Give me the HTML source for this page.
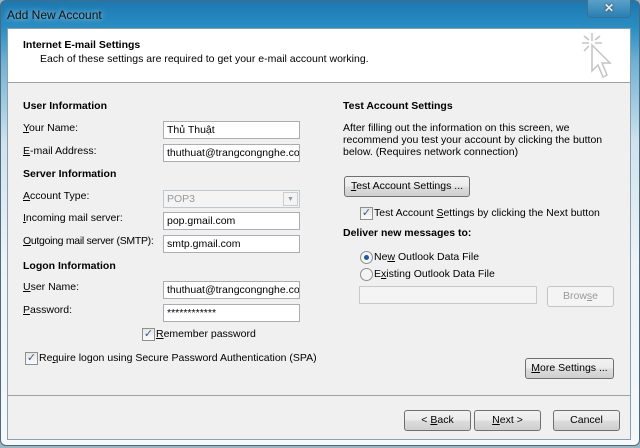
<!DOCTYPE html>
<html><head><meta charset="utf-8"><style>
*{margin:0;padding:0;box-sizing:border-box}
body{width:640px;height:448px;overflow:hidden;background:#9fb4c2;font-family:"Liberation Sans",sans-serif;font-size:10.5px;color:#000;position:relative}
.frame{position:absolute;left:0;top:0;width:640px;height:446px;border-radius:6px;border:1px solid #4a6a80;background:linear-gradient(to bottom,#1b78b0 0px,#2a8fc4 28px,#6fb0d4 60px,#cfe2ec 140px,#eef3f6 260px,#f6f8f9 448px)}
.title{position:absolute;left:7px;top:8px;font-size:12px;color:#111;text-shadow:0 0 6px #cfe8f6}
.close{position:absolute;left:587px;top:0;width:44px;height:18px;border:1px solid #3d6f8e;border-top:none;border-radius:0 0 4px 4px;background:linear-gradient(#5aa0c8,#2a80b2);color:#e8e8e8;font-weight:bold;text-align:center;font-size:12px;line-height:16px;text-shadow:0 0 2px #333}
.client{position:absolute;left:7px;top:28px;width:624px;height:412px;background:#f0f0f0;border:1px solid #8aa0b0}
.hdr{position:absolute;left:0;top:0;width:622px;height:54px;background:#fff;border-bottom:1px solid #a0a0a0}
.a{position:absolute;white-space:nowrap}
.b{font-weight:bold}
.in{position:absolute;height:18px;background:#fff;border:1px solid #abadb3;padding-left:3px;line-height:16px;white-space:nowrap;overflow:hidden}
.btn{position:absolute;height:21px;border:1px solid #707070;border-radius:3px;background:linear-gradient(#f2f2f2 0,#ebebeb 50%,#dddddd 51%,#cfcfcf 100%);text-align:center;line-height:19px}
.cb{position:absolute;width:13px;height:13px;border:1px solid #8e8f8f;background:linear-gradient(#e6e6e6,#fafafa);font-size:11px;line-height:11px;text-align:center;color:#3a5a8a}
.rd{position:absolute;width:13px;height:13px;border-radius:50%;border:1px solid #8e8f8f;background:#f4f4f4}
u{text-decoration:underline}
</style></head><body>
<div class="frame"></div>
<div class="title">Add New Account</div>
<div class="close">✕</div>
<div class="client">
 <div class="hdr">
  <div class="a b" style="left:15px;top:10px">Internet E-mail Settings</div>
  <div class="a" style="left:32px;top:24px">Each of these settings are required to get your e-mail account working.</div>
  <svg style="position:absolute;left:572px;top:4px" width="40" height="48" viewBox="0 0 40 48"><g stroke="#c4c4c4" stroke-width="1.5" fill="none"><line x1="12" y1="0" x2="12" y2="8"/><line x1="2" y1="10" x2="9" y2="10"/><line x1="15" y1="10" x2="22" y2="10"/><line x1="4" y1="3" x2="9" y2="7"/><line x1="20" y1="3" x2="15" y2="7"/><line x1="4" y1="18" x2="9" y2="13"/><path d="M12 12 L12 38 L18 32 L23 44 L27 42 L22 30 L30 30 Z" fill="#fff"/></g></svg>
 </div>
 <div class="a b" style="left:15px;top:71px">User Information</div>
 <div class="a" style="left:15px;top:93px"><u>Y</u>our Name:</div>
 <div class="in" style="left:155px;top:92px;width:137px">Thủ Thuật</div>
 <div class="a" style="left:15px;top:116px"><u>E</u>-mail Address:</div>
 <div class="in" style="left:155px;top:115px;width:137px">thuthuat@trangcongnghe.com</div>
 <div class="a b" style="left:15px;top:139px">Server Information</div>
 <div class="a" style="left:15px;top:161px"><u>A</u>ccount Type:</div>
 <div class="in" style="left:155px;top:161px;width:137px;background:#f4f4f4;color:#999;border-color:#c0c8d0">POP3<span style="position:absolute;right:1px;top:1px;width:15px;height:14px;border:1px solid #ccc;font-size:7px;text-align:center;line-height:13px;color:#999">▼</span></div>
 <div class="a" style="left:15px;top:183px"><u>I</u>ncoming mail server:</div>
 <div class="in" style="left:155px;top:183px;width:137px">pop.gmail.com</div>
 <div class="a" style="left:15px;top:206px;letter-spacing:-0.3px"><u>O</u>utgoing mail server (SMTP):</div>
 <div class="in" style="left:155px;top:206px;width:137px">smtp.gmail.com</div>
 <div class="a b" style="left:15px;top:231px">Logon Information</div>
 <div class="a" style="left:15px;top:252px"><u>U</u>ser Name:</div>
 <div class="in" style="left:155px;top:252px;width:137px">thuthuat@trangcongnghe.com</div>
 <div class="a" style="left:15px;top:275px"><u>P</u>assword:</div>
 <div class="in" style="left:155px;top:275px;width:137px">************</div>
 <div class="cb" style="left:134px;top:299px">✓</div>
 <div class="a" style="left:148px;top:299px"><u>R</u>emember password</div>
 <div class="cb" style="left:17px;top:323px">✓</div>
 <div class="a" style="left:31px;top:323px">Re<u>q</u>uire logon using Secure Password Authentication (SPA)</div>

 <div class="a b" style="left:335px;top:71px">Test Account Settings</div>
 <div class="a" style="left:335px;top:93px;line-height:12px">After filling out the information on this screen, we<br>recommend you test your account by clicking the button<br>below. (Requires network connection)</div>
 <div class="btn" style="left:336px;top:147px;width:126px"><u>T</u>est Account Settings ...</div>
 <div class="cb" style="left:352px;top:178px">✓</div>
 <div class="a" style="left:366px;top:178px">Test Account <u>S</u>ettings by clicking the Next button</div>
 <div class="a b" style="left:335px;top:198px">Deliver new messages to:</div>
 <div class="rd" style="left:352px;top:222px"><div style="position:absolute;left:3px;top:3px;width:5px;height:5px;border-radius:50%;background:#1f5a9a"></div></div>
 <div class="a" style="left:366px;top:222px">Ne<u>w</u> Outlook Data File</div>
 <div class="rd" style="left:352px;top:239px"></div>
 <div class="a" style="left:366px;top:239px">E<u>x</u>isting Outlook Data File</div>
 <div class="in" style="left:351px;top:257px;width:178px;border-color:#c8c8c8;background:#f4f4f4"></div>
 <div class="btn" style="left:539px;top:257px;width:67px;border-color:#c4c4c4;background:#f4f4f4;color:#999">Brow<u>s</u>e</div>
 <div class="btn" style="left:517px;top:329px;width:89px"><u>M</u>ore Settings ...</div>
 <div style="position:absolute;left:0;top:366px;width:622px;height:1px;background:#a0a0a0"></div>
 <div class="btn" style="left:396px;top:381px;width:67px">&lt; <u>B</u>ack</div>
 <div class="btn" style="left:466px;top:381px;width:67px"><u>N</u>ext &gt;</div>
 <div class="btn" style="left:545px;top:381px;width:67px">Cancel</div>
</div>
</body></html>
